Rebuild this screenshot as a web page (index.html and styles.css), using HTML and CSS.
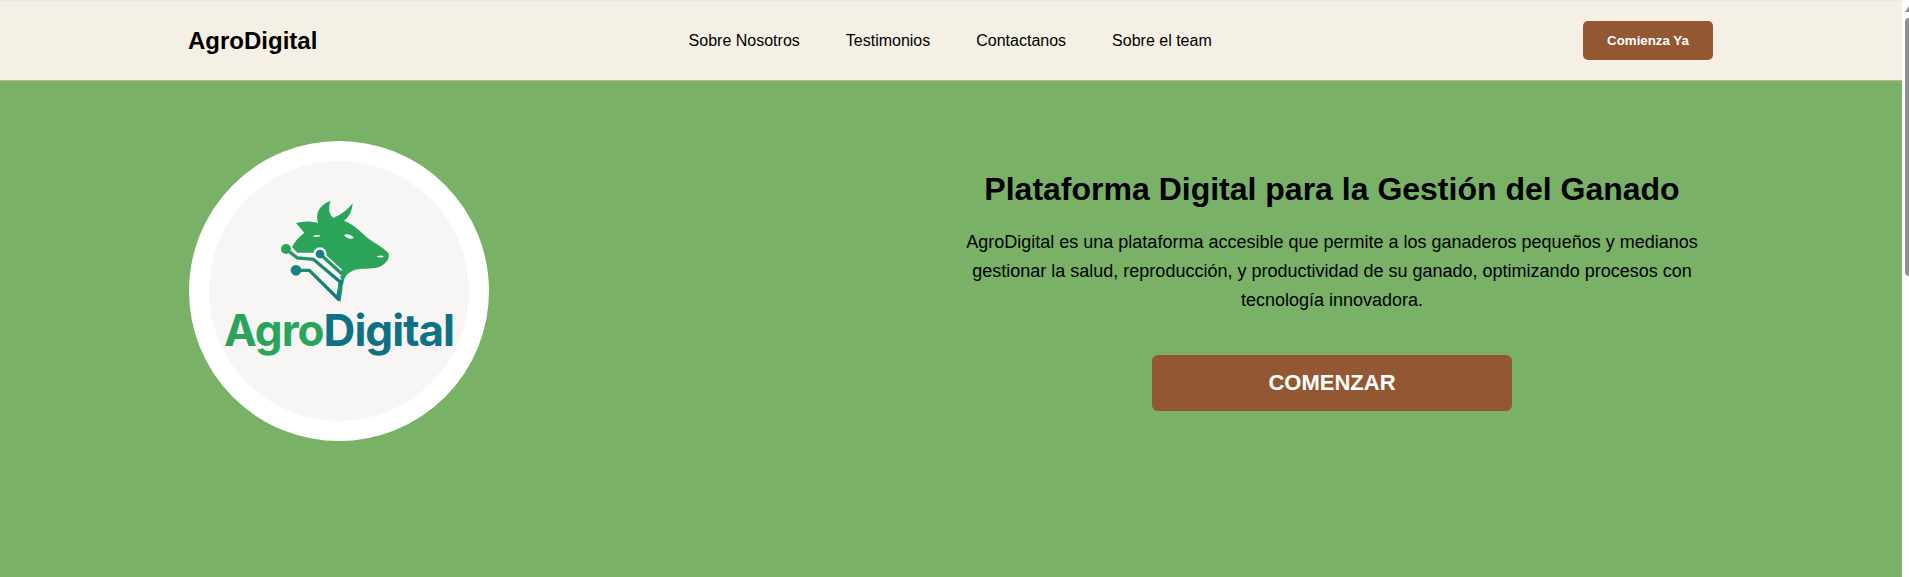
FILE: index.html
```html
<!DOCTYPE html>
<html lang="es">
<head>
  <meta charset="UTF-8">
  <meta name="viewport" content="width=device-width, initial-scale=1.0">
  <title>AgroDigital</title>
  <link rel="stylesheet" href="styles.css">
</head>
<body>
  <div class="page">
    <header class="site-header">
      <div class="brand">AgroDigital</div>
      <nav class="main-nav">
        <a href="#">Sobre Nosotros</a>
        <a href="#">Testimonios</a>
        <a href="#">Contactanos</a>
        <a href="#">Sobre el team</a>
      </nav>
      <a class="header-btn" href="#">Comienza Ya</a>
    </header>

    <section class="hero">
      <div class="logo-ring">
        <svg class="logo" viewBox="0 0 260 260" role="img" aria-label="AgroDigital">
          <defs>
            <linearGradient id="neckFill" gradientUnits="userSpaceOnUse" x1="0" y1="240" x2="0" y2="335">
              <stop offset="0" stop-color="#2aa35b"/>
              <stop offset="1" stop-color="#14807f"/>
            </linearGradient>
            <linearGradient id="wireFill" gradientUnits="userSpaceOnUse" x1="100" y1="190" x2="240" y2="330">
              <stop offset="0" stop-color="#1f9a68"/>
              <stop offset="1" stop-color="#0f7480"/>
            </linearGradient>
          </defs>
          <g transform="translate(51 29) scale(.3333)">
            <path fill="#2ba45a" d="M174 99C164 68 182 42 212 32C204 54 206 72 220 84C240 76 260 62 278 40C276 66 266 82 252 92C274 100 294 116 312 134C332 154 366 168 386 190C390 212 370 228 347 234C320 238 290 232 268 248L256 256L197 178L160 188L112 188L96 170C104 154 118 140 133 128C124 118 116 108 108 99C130 93 154 93 174 99Z"/>
            <path fill="#2ba45a" d="M197 170L264 230L256 258L190 196Z"/>
            <path fill="url(#neckFill)" d="M268 245C254 258 248 276 247 300L241 336L228 320L234 290C234 272 242 256 252 244Z"/>
            <circle cx="180" cy="192" r="20" fill="#f7f6f4"/>
            <path fill="none" stroke="#f7f6f4" stroke-width="20" d="M180 192L240 247"/>
            <path fill="none" stroke="#23956d" stroke-width="10" d="M180 192L246 252"/>
            <path fill="none" stroke="#f7f6f4" stroke-width="20" d="M78 177L112 204L160 208L238 274"/>
            <path fill="none" stroke="url(#wireFill)" stroke-width="10" d="M78 177L112 204L160 208L248 282"/>
            <path fill="none" stroke="url(#wireFill)" stroke-width="10" d="M108 241L148 241L238 330"/>
            <circle cx="78" cy="177" r="15" fill="#2ba45a"/>
            <circle cx="180" cy="192" r="13" fill="#12807f"/>
            <circle cx="108" cy="241" r="16" fill="#17857e"/>
            <path fill="#f7f6f4" d="M252 135C262 129 274 134 282 144C272 148 260 146 252 135Z"/>
            <path fill="#f7f6f4" d="M158 139C166 134 176 134 182 137C174 142 166 142 158 139Z"/>
            <path fill="#f7f6f4" d="M350 199C358 196 366 196 372 199C366 204 356 204 350 199Z"/>
          </g>
          <text class="logo-word" x="15" y="185" textLength="231" lengthAdjust="spacing"><tspan class="logo-agro">Agro</tspan><tspan class="logo-digital">Digital</tspan></text>
        </svg>
      </div>

      <div class="hero-copy">
        <h1>Plataforma Digital para la Gestión del Ganado</h1>
        <p>AgroDigital es una plataforma accesible que permite a los ganaderos pequeños y medianos gestionar la salud, reproducción, y productividad de su ganado, optimizando procesos con tecnología innovadora.</p>
        <a class="hero-btn" href="#">COMENZAR</a>
      </div>
    </section>
  </div>

  <div class="scrollbar">
    <div class="scroll-arrow"></div>
    <div class="scroll-thumb"></div>
  </div>
</body>
</html>
```

FILE: styles.css
```css
* {
  margin: 0;
  padding: 0;
  box-sizing: border-box;
}

html, body {
  height: 100%;
  overflow: hidden;
}

body {
  display: flex;
  background-color: #fdfdfd;
  font-family: "Liberation Sans", Arial, sans-serif;
  color: #000;
}

a {
  text-decoration: none;
  color: inherit;
}

.page {
  flex: 1;
  display: flex;
  flex-direction: column;
  min-width: 0;
  border-top: 1px solid #f6dfe8;
}

.site-header {
  height: 80px;
  padding: 0 189px;
  display: flex;
  align-items: center;
  justify-content: space-between;
  background-color: #f5f0e6;
  border-bottom: 1px solid #c4ae91;
}

.brand {
  margin-left: -1px;
  font-size: 24px;
  font-weight: bold;
}

.main-nav {
  display: flex;
  gap: 46px;
  font-size: 16px;
}

.header-btn {
  width: 130px;
  height: 39px;
  display: flex;
  align-items: center;
  justify-content: center;
  background-color: #935831;
  color: #fff;
  border-radius: 5px;
  font-size: 13.3px;
  font-weight: bold;
}

.hero {
  flex: 1;
  display: flex;
  justify-content: space-between;
  align-items: flex-start;
  padding: 60px 189px 0;
  background-color: #79b167;
}

.logo-ring {
  width: 300px;
  height: 300px;
  border: 20px solid #fff;
  border-radius: 50%;
  background-color: #f7f6f4;
  overflow: hidden;
}

.logo {
  display: block;
  width: 260px;
  height: 260px;
}

.logo-word {
  font-family: Inter, "Noto Sans", sans-serif;
  font-size: 44px;
  font-weight: 700;
}

.logo-agro {
  fill: #2aa35b;
}

.logo-digital {
  fill: #0e7184;
}

.hero-copy {
  width: 762px;
  padding-top: 26px;
  display: flex;
  flex-direction: column;
  align-items: center;
  text-align: center;
}

.hero-copy h1 {
  font-size: 32px;
  line-height: 44px;
}

.hero-copy p {
  margin-top: 17px;
  width: 740px;
  font-size: 18px;
  line-height: 29px;
}

.hero-btn {
  width: 360px;
  height: 56px;
  margin-top: 40px;
  display: flex;
  align-items: center;
  justify-content: center;
  background-color: #935831;
  color: #fff;
  border-radius: 6px;
  font-size: 22px;
  font-weight: bold;
}

.scrollbar {
  width: 7px;
  display: flex;
  flex-direction: column;
  align-items: flex-end;
  padding-top: 6px;
}

.scroll-arrow {
  width: 0;
  height: 0;
  border-left: 4px solid transparent;
  border-bottom: 6px solid #8f8f8f;
}

.scroll-thumb {
  width: 4px;
  height: 258px;
  margin-top: 6px;
  background-color: #8f8f8f;
  border-radius: 4px 0 0 4px;
}
```
